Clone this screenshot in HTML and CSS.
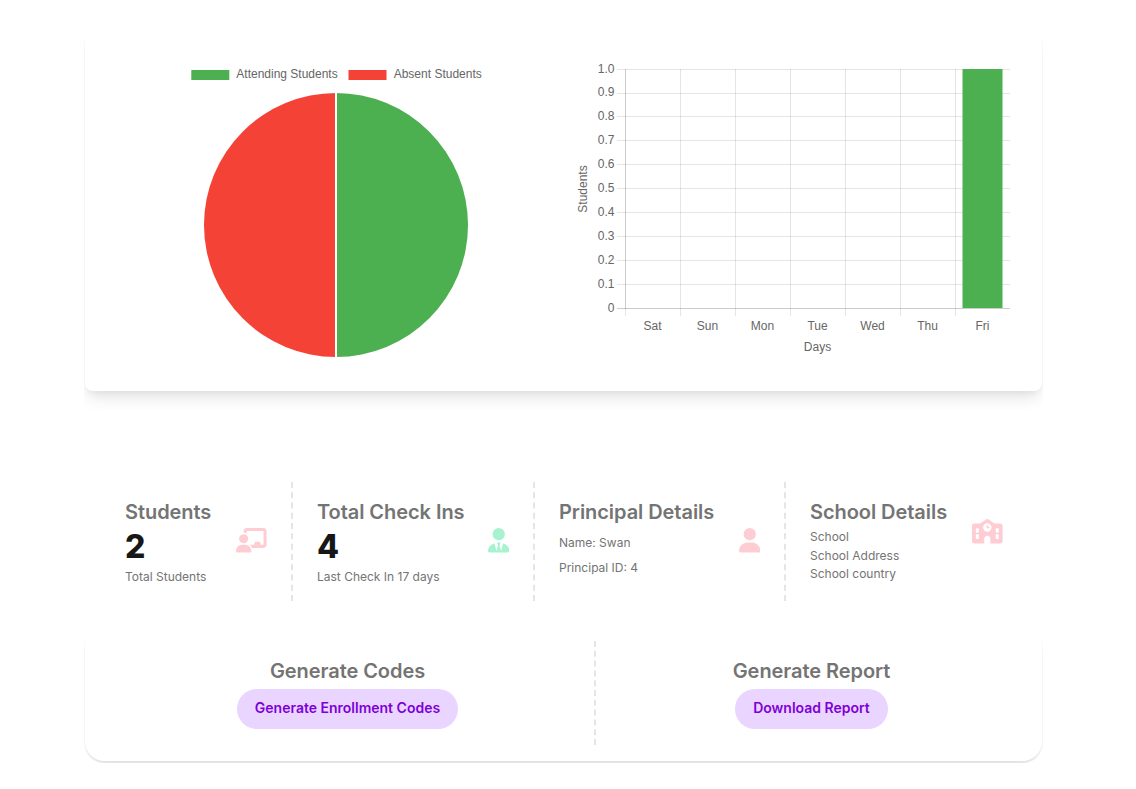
FILE: index.html
```html
<!DOCTYPE html>
<html lang="en">
<head>
<meta charset="utf-8">
<title>School Dashboard</title>
<link rel="stylesheet" href="styles.css">
</head>
<body>
<main class="page">
  <div class="charts-clip">
    <section class="charts">
      <svg class="pie" viewBox="0 0 440 310" role="img" aria-label="Attendance">
        <rect x="76.3" y="10" width="38" height="10" fill="#4caf50"/>
        <text x="121.3" y="18">Attending Students</text>
        <rect x="233.5" y="10" width="38" height="10" fill="#f44336"/>
        <text x="278.7" y="18">Absent Students</text>
        <path d="M221 33a132 132 0 0 1 0 264z" fill="#4caf50"/>
        <path d="M221 33a132 132 0 0 0 0 264z" fill="#f44336"/>
        <path d="M221 32v266" stroke="#fff" stroke-width="2"/>
      </svg>
      <svg class="bars" viewBox="0 0 450 310" role="img" aria-label="Students per day">
        <path class="grid" d="M52 9.5h393M52 33.5h393M52 56.5h393M52 80.5h393M52 104.5h393M52 128.5h393M52 152.5h393M52 176.5h393M52 200.5h393M52 224.5h393M115.5 9v247M170.5 9v247M225.5 9v247M280.5 9v247M335.5 9v247M390.5 9v247M60.5 249v7"/>
        <path class="axis" d="M60.5 9v240M52 248.5h393"/>
        <rect x="397.5" y="9" width="40" height="239" fill="#4caf50"/>
        <g text-anchor="end">
          <text x="49.5" y="13">1.0</text><text x="49.5" y="36">0.9</text><text x="49.5" y="60">0.8</text><text x="49.5" y="84">0.7</text><text x="49.5" y="108">0.6</text><text x="49.5" y="132">0.5</text><text x="49.5" y="156">0.4</text><text x="49.5" y="180">0.3</text><text x="49.5" y="204">0.2</text><text x="49.5" y="228">0.1</text><text x="49.5" y="252">0</text>
        </g>
        <g text-anchor="middle">
          <text x="87.5" y="270">Sat</text><text x="142.5" y="270">Sun</text><text x="197.5" y="270">Mon</text><text x="252.5" y="270">Tue</text><text x="307.5" y="270">Wed</text><text x="362.5" y="270">Thu</text><text x="417.5" y="270">Fri</text>
          <text x="252.5" y="291">Days</text>
          <text transform="translate(22 129) rotate(-90)">Students</text>
        </g>
      </svg>
    </section>
  </div>

  <section class="stats">
    <div class="stat">
      <div><h2>Students</h2><div class="value">2</div><p class="desc">Total Students</p></div>
      <svg class="icon wide" viewBox="0 0 640 512"><path d="M160 64c0-35.300 28.700-64 64-64H576c35.300 0 64 28.700 64 64V352c0 35.300-28.700 64-64 64H336.800c-11.800-25.500-29.900-47.500-52.400-64H384V320c0-17.700 14.300-32 32-32h64c17.700 0 32 14.300 32 32v32h64V64L224 64v49.100C205.200 102.200 183.300 96 160 96V64zm0 64a96 96 0 1 1 0 192 96 96 0 1 1 0-192zM133.300 352h53.300C260.300 352 320 411.700 320 485.300c0 14.700-11.900 26.700-26.700 26.700H26.700C11.900 512 0 500.100 0 485.300C0 411.700 59.700 352 133.300 352z"/></svg>
    </div>
    <div class="stat">
      <div><h2>Total Check Ins</h2><div class="value">4</div><p class="desc">Last Check In 17 days</p></div>
      <svg class="icon green" viewBox="0 0 448 512"><path d="M224 256A128 128 0 1 1 224 0a128 128 0 1 1 0 256zM209.100 359.200l-18.600-31c-6.400-10.700 1.300-24.200 13.700-24.200H224h19.700c12.400 0 20.100 13.600 13.700 24.200l-18.600 31 33.400 123.900 39.500-161.200c77.200 12 136.300 78.800 136.300 159.400c0 17-13.800 30.700-30.700 30.700H265.100 182.900 30.700C13.800 512 0 498.200 0 481.300c0-80.600 59.100-147.400 136.300-159.400l39.500 161.200 33.400-123.900z"/></svg>
    </div>
    <div class="stat">
      <div><h2>Principal Details</h2><p class="desc loose">Name: Swan</p><p class="desc loose">Principal ID: 4</p></div>
      <svg class="icon" viewBox="0 0 448 512"><path d="M224 256A128 128 0 1 0 224 0a128 128 0 1 0 0 256zm-45.700 48C79.800 304 0 383.800 0 482.300C0 498.700 13.300 512 29.700 512H418.300c16.400 0 29.700-13.300 29.700-29.700C448 383.800 368.200 304 269.700 304H178.300z"/></svg>
    </div>
    <div class="stat school">
      <div><h2>School Details</h2><div class="lines"><p class="desc tight">School</p><p class="desc tight">School Address</p><p class="desc tight">School country</p></div></div>
      <svg class="icon wide" viewBox="0 0 640 512"><path fill-rule="evenodd" d="M337.800 5.400C327-1.800 313-1.800 302.200 5.400L166.300 96H48C21.500 96 0 117.500 0 144V464c0 26.500 21.500 48 48 48H256V416c0-35.300 28.700-64 64-64s64 28.700 64 64v96H592c26.500 0 48-21.500 48-48V144c0-26.500-21.500-48-48-48H473.700L337.800 5.400zM96 192h32c8.800 0 16 7.200 16 16v64c0 8.800-7.200 16-16 16H96c-8.800 0-16-7.200-16-16V208c0-8.800 7.200-16 16-16zm400 16c0-8.800 7.200-16 16-16h32c8.800 0 16 7.200 16 16v64c0 8.800-7.200 16-16 16H512c-8.800 0-16-7.200-16-16V208zM96 320h32c8.800 0 16 7.200 16 16v64c0 8.800-7.200 16-16 16H96c-8.800 0-16-7.200-16-16V336c0-8.800 7.200-16 16-16zm400 16c0-8.800 7.200-16 16-16h32c8.800 0 16 7.200 16 16v64c0 8.800-7.200 16-16 16H512c-8.800 0-16-7.200-16-16V336zM232 176a88 88 0 1 1 176 0 88 88 0 1 1 -176 0zm88-48c-8.800 0-16 7.200-16 16v32c0 8.800 7.200 16 16 16h32c8.800 0 16-7.200 16-16s-7.200-16-16-16H336V144c0-8.800-7.200-16-16-16z"/></svg>
    </div>
  </section>

  <div class="actions-clip">
    <section class="actions">
      <div class="action"><h2>Generate Codes</h2><button class="pill">Generate Enrollment Codes</button></div>
      <div class="action"><h2>Generate Report</h2><button class="pill">Download Report</button></div>
    </section>
  </div>
</main>
</body>
</html>
```
FILE: styles.css
```css
* { box-sizing: border-box; }

body {
  margin: 0;
  background: #fff;
  font-family: Inter, "Liberation Sans", sans-serif;
  color: #171717;
}

h2, p { margin: 0; }

.page {
  width: 959px;
  height: 789px;
  margin-left: 84px;
  padding-top: 30px;
  overflow: hidden;
}

.charts-clip {
  height: 452px;
  padding: 0 1px;
  overflow: hidden;
}

.charts {
  display: flex;
  height: 361px;
  padding: 30px 0 0 30px;
  border-radius: 8px;
  background: #fff;
  box-shadow: 0 10px 15px -3px rgba(0, 0, 0, .1), 0 4px 6px -2px rgba(0, 0, 0, .05);
}

.pie { width: 440px; height: 310px; margin-right: 10px; }
.bars { width: 450px; height: 310px; }

.charts text {
  font: 12px "Liberation Sans", Arial, sans-serif;
  fill: #666;
}

.grid { stroke: rgba(0, 0, 0, .1); fill: none; }
.axis { stroke: rgba(0, 0, 0, .2); fill: none; }

.stats {
  display: grid;
  grid-template-columns: 192px 242px 251px 241px;
  height: 119px;
  margin-left: 17px;
}

.stat {
  display: flex;
  justify-content: space-between;
  height: 119px;
  padding: 16px 24px 0;
  border-right: 2px dashed #e5e5e5;
}

.stat:last-child { border-right: 0; }

h2 {
  font-size: 20px;
  font-weight: 600;
  line-height: 28px;
  letter-spacing: -.06px;
  color: #747474;
  white-space: nowrap;
}

.value {
  padding-top: 1px;
  font-size: 32px;
  font-weight: 800;
  line-height: 40px;
}

.desc {
  font-size: 12px;
  line-height: 20px;
  color: #747474;
  white-space: nowrap;
}

.loose { line-height: 25px; }
.loose:nth-of-type(1) { margin-top: 4px; }
.lines { padding-top: 2px; }
.tight { line-height: 18.5px; }

.icon {
  flex: none;
  width: 21.5px;
  height: 24.5px;
  margin-top: 30px;
  fill: #fecdd3;
}

.wide { width: 30.6px; }
.green { fill: #a7f3d0; }
.school .icon { margin-top: 21px; }

.actions-clip {
  height: 138px;
  margin-top: 24px;
  padding: 0 1px;
  border-radius: 20px;
  overflow: hidden;
}

.actions {
  display: grid;
  grid-template-columns: 495px 431px;
  height: 136px;
  padding: 16px;
  border-radius: 20px;
  background: #fff;
  box-shadow: 0 10px 15px -3px rgba(0, 0, 0, .1), 0 4px 6px -2px rgba(0, 0, 0, .05);
}

.action {
  display: flex;
  flex-direction: column;
  align-items: center;
  gap: 4px;
  padding-top: 16px;
}

.action:first-child { border-right: 2px dashed #e5e5e5; }

.pill {
  height: 40px;
  padding: 0 18px 3px;
  border: 0;
  border-radius: 20px;
  background: #e9d5ff;
  color: #7e00d8;
  font: 600 14px Inter, "Liberation Sans", sans-serif;
}
```
